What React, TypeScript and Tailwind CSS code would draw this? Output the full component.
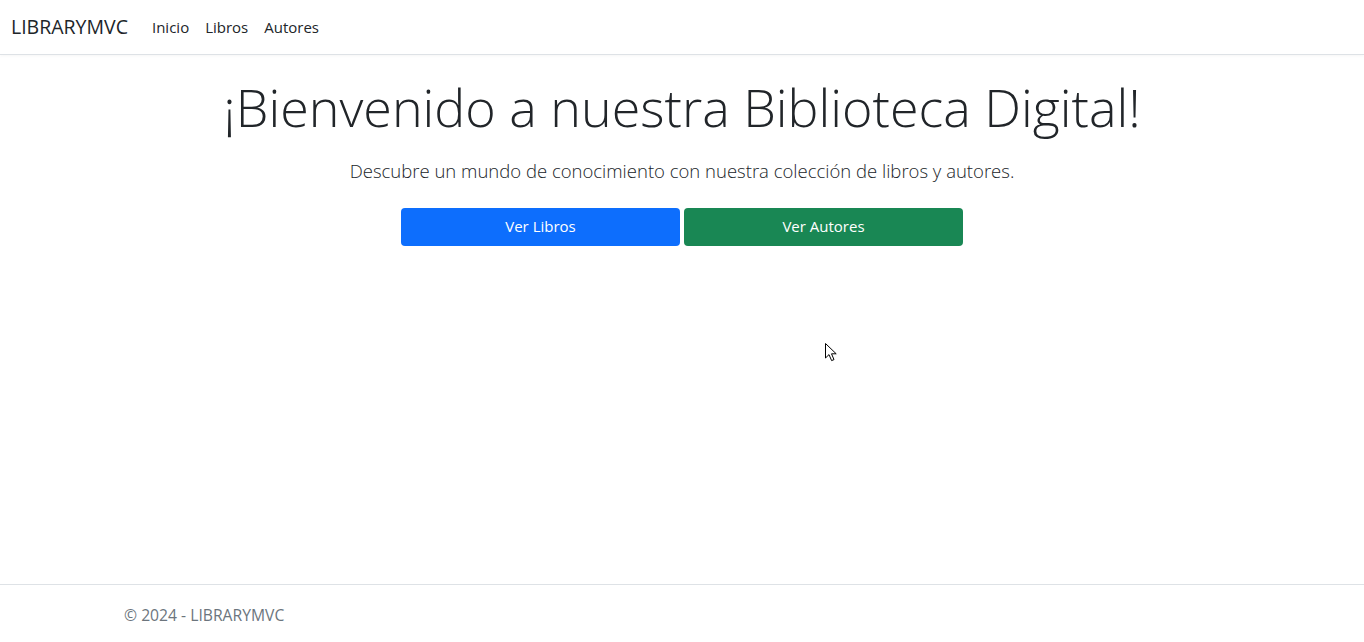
import React from "react";

const navigation = [
  { name: "Inicio", href: "#" },
  { name: "Libros", href: "#" },
  { name: "Autores", href: "#" },
];

function Cursor() {
  return (
    <svg
      className="pointer-events-none absolute left-[824px] top-[342px]"
      width="14"
      height="21"
      viewBox="0 0 14 21"
    >
      <path
        d="M1.5 1.5 L1.5 16 L5 12.6 L7.6 18.6 L10 17.6 L7.5 11.8 L12.2 11.8 Z"
        fill="#fff"
        stroke="#000"
        strokeWidth="1"
        strokeLinejoin="miter"
      />
    </svg>
  );
}

export default function App() {
  return (
    <div className="relative flex h-[642px] flex-col overflow-hidden bg-white font-['Open_Sans',sans-serif] text-[#212529]">
      {/* Navbar */}
      <header className="border-b border-[#dee2e6] bg-white shadow-[0_1px_3px_rgba(0,0,0,0.04)]">
        <nav className="flex h-[54px] items-center pl-[11px] pr-3">
          <a href="#" className="mr-4 text-[19.5px] text-[#212529]">
            LIBRARYMVC
          </a>
          <ul className="flex">
            {navigation.map((item) => (
              <li key={item.name}>
                <a href="#" className="block px-2 text-[15px] text-[#212529]">
                  {item.name}
                </a>
              </li>
            ))}
          </ul>
        </nav>
      </header>

      {/* Main */}
      <main className="mx-auto w-[1140px] flex-1 px-3 pt-[16px]">
        <div className="text-center">
          <h1 className="text-[52px] font-light leading-[1.4]">
            ¡Bienvenido a nuestra Biblioteca Digital!
          </h1>
          <p className="mt-[13px] text-[18.5px] font-light leading-[1.5]">
            Descubre un mundo de conocimiento con nuestra colección de libros y autores.
          </p>
          <div className="mt-[23px] flex justify-center gap-1">
            <a
              href="#"
              className="flex h-[38px] w-[279px] items-center justify-center rounded-[4px] bg-[#0d6efd] text-[15px] text-white"
            >
              Ver Libros
            </a>
            <a
              href="#"
              className="flex h-[38px] w-[279px] items-center justify-center rounded-[4px] bg-[#198754] text-[15px] text-white"
            >
              Ver Autores
            </a>
          </div>
        </div>
      </main>

      {/* Footer */}
      <footer className="h-[58px] border-t border-[#dee2e6]">
        <div className="mx-auto w-[1140px] px-3 pt-[18px] text-[15.7px] leading-[24px] text-[#6c757d]">
          © 2024 - LIBRARYMVC
        </div>
      </footer>

      <Cursor />
    </div>
  );
}
